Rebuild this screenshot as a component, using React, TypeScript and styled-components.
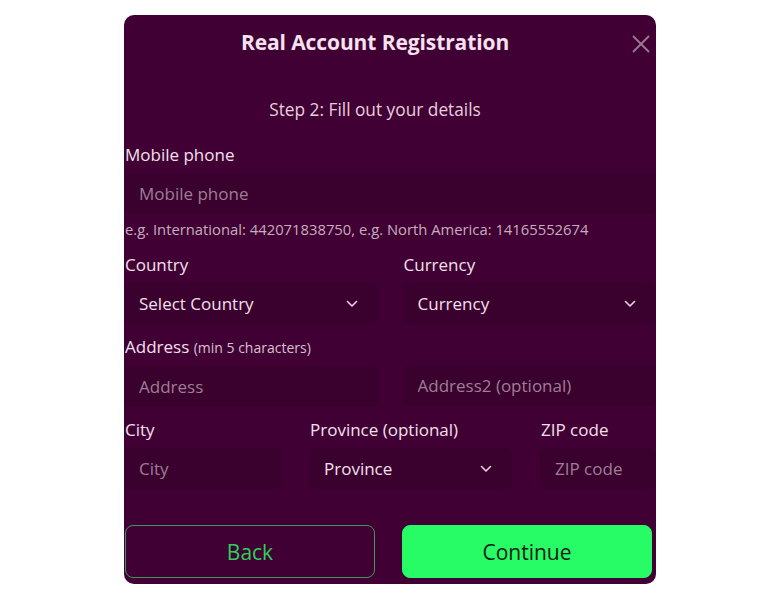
import styled, { createGlobalStyle } from 'styled-components';

const GlobalStyle = createGlobalStyle`
  html, body {
    margin: 0;
    padding: 0;
    background: #ffffff;
  }
  * {
    box-sizing: border-box;
  }
`;

const Page = styled.div`
  display: flex;
  justify-content: center;
  padding-top: 15px;
  font-family: 'Open Sans', 'Noto Sans', sans-serif;
`;

const Modal = styled.div`
  width: 532px;
  height: 569px;
  background: #400033;
  border-radius: 10px;
  display: flex;
  flex-direction: column;
  overflow: hidden;
`;

const Header = styled.div`
  display: flex;
  align-items: center;
  height: 54px;
`;

const Title = styled.h2`
  flex: 1;
  margin: 0;
  text-align: center;
  font-size: 21px;
  font-weight: 700;
  color: #f4e2ee;
  letter-spacing: -0.1px;
`;

const CloseButton = styled.button`
  width: 30px;
  height: 30px;
  padding: 0;
  border: none;
  background: transparent;
  display: flex;
  align-items: center;
  justify-content: center;
  cursor: pointer;
  margin-top: 4px;
`;

const Step = styled.p`
  margin: 29px 0 0;
  padding-right: 30px;
  text-align: center;
  font-size: 17.3px;
  line-height: 24px;
  color: #e6cfdf;
`;

const Form = styled.div`
  display: flex;
  flex-direction: column;
  margin-top: 21px;
`;

const Row = styled.div<{ $cols: string; $gap: number; $top: number }>`
  display: grid;
  grid-template-columns: ${({ $cols }) => $cols};
  column-gap: ${({ $gap }) => $gap}px;
  margin-top: ${({ $top }) => $top}px;
`;

const Field = styled.div`
  display: flex;
  flex-direction: column;
  gap: 6px;
  min-width: 0;
`;

const Label = styled.label`
  padding-left: 1px;
  font-size: 17px;
  line-height: 24px;
  color: #f3e0ec;
  white-space: nowrap;
`;

const LabelNote = styled.span`
  font-size: 14px;
  color: #d9c1d1;
`;

const Input = styled.input`
  width: 100%;
  height: 41px;
  padding: 0 15px;
  border: none;
  border-radius: 6px;
  outline: none;
  background: #3a002e;
  font-family: inherit;
  font-size: 17px;
  color: #f3e0ec;
  &::placeholder {
    color: #9d7f95;
  }
`;

const Select = styled.div`
  height: 41px;
  padding: 0 20px 0 15px;
  border-radius: 6px;
  background: #3a002e;
  display: flex;
  align-items: center;
  justify-content: space-between;
  font-size: 17px;
  color: #f3e0ec;
  cursor: pointer;
`;

const Hint = styled.div`
  margin-top: 5px;
  padding-left: 1px;
  font-size: 14.8px;
  line-height: 20px;
  color: #c7aebf;
  white-space: nowrap;
`;

const Actions = styled.div`
  display: grid;
  grid-template-columns: 1fr 1fr;
  column-gap: 27px;
  padding: 0 4px 0 1px;
  margin-top: 36px;
`;

const Button = styled.button<{ $primary?: boolean }>`
  height: 53px;
  border-radius: 8px;
  font-family: inherit;
  font-size: 21px;
  cursor: pointer;
  border: 1px solid ${({ $primary }) => ($primary ? '#27fb66' : '#3b9a58')};
  background: ${({ $primary }) => ($primary ? '#27fb66' : 'transparent')};
  color: ${({ $primary }) => ($primary ? '#0f1a12' : '#2bd15c')};
`;

const Chevron = () => (
  <svg width="12" height="8" viewBox="0 0 12 8" fill="none">
    <path d="M1.5 1.5 L6 6 L10.5 1.5" stroke="#e8d4e2" strokeWidth="1.6" strokeLinecap="round" strokeLinejoin="round" />
  </svg>
);

const CloseIcon = () => (
  <svg width="18" height="18" viewBox="0 0 18 18" fill="none">
    <path d="M1 1 L17 17 M17 1 L1 17" stroke="#9a7a91" strokeWidth="1.8" />
  </svg>
);

const App = () => {
  return (
    <>
      <GlobalStyle />
      <Page>
        <Modal>
          <Header>
            <Title>Real Account Registration</Title>
            <CloseButton aria-label="Close">
              <CloseIcon />
            </CloseButton>
          </Header>

          <Step>Step 2: Fill out your details</Step>

          <Form>
            <Field>
              <Label>Mobile phone</Label>
              <Input placeholder="Mobile phone" />
            </Field>
            <Hint>e.g. International: 442071838750, e.g. North America: 14165552674</Hint>

            <Row $cols="1fr 1fr" $gap={25} $top={14}>
              <Field>
                <Label>Country</Label>
                <Select>
                  Select Country
                  <Chevron />
                </Select>
              </Field>
              <Field>
                <Label>Currency</Label>
                <Select>
                  Currency
                  <Chevron />
                </Select>
              </Field>
            </Row>

            <Row $cols="1fr 1fr" $gap={25} $top={11}>
              <Field>
                <Label>
                  Address <LabelNote>(min 5 characters)</LabelNote>
                </Label>
                <Input placeholder="Address" />
              </Field>
              <Field>
                <Label>&nbsp;</Label>
                <Input placeholder="Address2 (optional)" />
              </Field>
            </Row>

            <Row $cols="157px 203px 1fr" $gap={28} $top={11}>
              <Field>
                <Label>City</Label>
                <Input placeholder="City" />
              </Field>
              <Field>
                <Label>Province (optional)</Label>
                <Select>
                  Province
                  <Chevron />
                </Select>
              </Field>
              <Field>
                <Label>ZIP code</Label>
                <Input placeholder="ZIP code" />
              </Field>
            </Row>
          </Form>

          <Actions>
            <Button>Back</Button>
            <Button $primary>Continue</Button>
          </Actions>
        </Modal>
      </Page>
    </>
  );
};

export default App;
